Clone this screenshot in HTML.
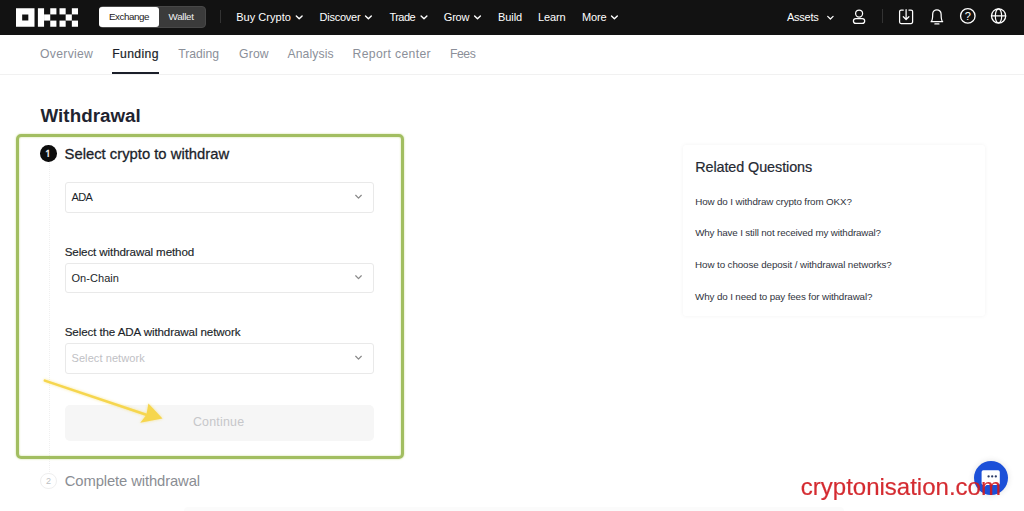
<!DOCTYPE html>
<html><head><meta charset="utf-8">
<style>
*{box-sizing:border-box;margin:0;padding:0}
html,body{width:1024px;height:511px;overflow:hidden;background:#fff;font-family:"Liberation Sans",sans-serif;color:#1b1f2a}
.abs{position:absolute}
.x{position:absolute;white-space:nowrap}
#nav{position:absolute;left:0;top:0;width:1024px;height:35px;background:#121212}
.sel{position:absolute;left:65px;width:309px;border:1px solid #e9e9e9;border-radius:3px;background:#fff}
svg{position:absolute;overflow:visible}
</style></head><body>
<div id="nav"></div>
<!-- logo -->
<svg style="left:16px;top:7.750px" width="62" height="19" viewBox="0 0 62 18.500">
  <g fill="#fff">
    <path d="M0 0h18.500v18.500H0z M6.170 6.170v6.160h6.160V6.170z" fill-rule="evenodd"/>
    <rect x="21.900" y="0" width="6.170" height="18.500"/>
    <rect x="28.070" y="6.170" width="6.170" height="6.170"/>
    <rect x="34.240" y="0" width="6.170" height="6.170"/><rect x="34.240" y="12.330" width="6.170" height="6.170"/>
    <rect x="43.500" y="0" width="6.170" height="6.170"/><rect x="55.840" y="0" width="6.170" height="6.170"/>
    <rect x="49.670" y="6.170" width="6.170" height="6.170"/>
    <rect x="43.500" y="12.330" width="6.170" height="6.170"/><rect x="55.840" y="12.330" width="6.170" height="6.170"/>
  </g>
</svg>
<!-- toggle -->
<div class="abs" style="left:98.500px;top:6px;width:107px;height:22px;border-radius:4px;background:#3b3b3b;border:1px solid #484848"></div>
<div class="abs" style="left:98.900px;top:6.800px;width:60.200px;height:20.400px;border-radius:3px;background:#fff"></div>
<div class="abs" style="left:220px;top:10px;width:1px;height:13px;background:#333"></div>
<div class="abs" style="left:882px;top:9px;width:1px;height:14px;background:#333"></div>
<!-- nav chevrons -->
<svg style="left:0;top:0" width="1024" height="35" fill="none" stroke="#fff" stroke-width="1.400" stroke-linecap="round" stroke-linejoin="round">
  <path d="M296.300 15.900l2.900 2.900 2.900-2.900"/>
  <path d="M365.500 15.900l2.900 2.900 2.900-2.900"/>
  <path d="M421.100 15.900l2.900 2.900 2.900-2.900"/>
  <path d="M474.600 15.900l2.900 2.900 2.900-2.900"/>
  <path d="M611.500 15.900l2.900 2.900 2.900-2.900"/>
  <path d="M827.700 16.300l2.700 2.700 2.700-2.700" stroke-width="1.200"/>
  <!-- user -->
  <circle cx="859.100" cy="13.500" r="3.500" stroke-width="1.250"/>
  <rect x="853.400" y="18.500" width="11.300" height="4.900" rx="2.450" stroke-width="1.250"/>
  <!-- download -->
  <path d="M903.300 10.100h-2.200a1.500 1.500 0 0 0-1.500 1.500v10.400a1.500 1.500 0 0 0 1.500 1.500h10a1.500 1.500 0 0 0 1.500-1.500v-10.400a1.500 1.500 0 0 0-1.500-1.500h-2.200" stroke-width="1.250"/>
  <path d="M906.100 9.700v9.400M903.300 16.700l2.800 2.800 2.800-2.800" stroke-width="1.250"/>
  <!-- bell -->
  <path d="M931.100 21.700c1.400-1 1.600-3 1.600-7.700a4.200 4.200 0 0 1 8.400 0c0 4.700.2 6.700 1.600 7.700z" stroke-width="1.250"/>
  <path d="M934.900 23.900h4" stroke-width="1.300"/>
  <!-- help -->
  <circle cx="967.800" cy="15.900" r="7.250" stroke-width="1.300"/>
  <!-- globe -->
  <circle cx="998.600" cy="15.900" r="7.100" stroke-width="1.300"/>
  <ellipse cx="998.500" cy="15.900" rx="3.200" ry="7.100" stroke-width="1.200"/>
  <path d="M991.400 15.900h14.200" stroke-width="1.200"/>
</svg>
<div class="x" style="left:964.700px;top:9.600px;font-size:11px;line-height:13px;color:#fff">?</div>

<!-- tabs -->
<div class="abs" style="left:0;top:74px;width:1024px;height:1px;background:#f1f1f1"></div>
<div class="abs" style="left:112px;top:72.200px;width:46.500px;height:1.800px;background:#1b1f2a"></div>

<!-- stepper -->
<div class="abs" style="left:48.500px;top:162px;width:0;height:312px;border-left:1.500px dotted #f0f0f0"></div>
<div class="abs" style="left:40.100px;top:145.100px;width:16.700px;height:16.700px;border-radius:50%;background:#0d0d0d"></div>
<div class="x" style="left:45.200px;top:149px;height:7.700px;overflow:hidden;font-size:10px;line-height:12px;color:#fff;-webkit-text-stroke:0.3px #fff">1</div>

<div class="sel" style="top:182px;height:30.500px"></div>
<div class="sel" style="top:262.500px;height:30.500px"></div>
<div class="sel" style="top:343px;height:30.500px"></div>
<svg style="left:0;top:0" width="1024" height="511" fill="none" stroke="#8a8a8a" stroke-width="1.250" stroke-linecap="round" stroke-linejoin="round">
  <path d="M355.700 195.300l2.800 2.800 2.800-2.800"/>
  <path d="M355.700 275.800l2.800 2.800 2.800-2.800"/>
  <path d="M355.700 356.300l2.800 2.800 2.800-2.800"/>
</svg>
<div class="abs" style="left:65px;top:405px;width:308.500px;height:36px;border-radius:5px;background:#f6f6f6"></div>

<div class="abs" style="left:40.200px;top:472.600px;width:16.500px;height:16.500px;border-radius:50%;background:#fff;border:1px solid #efefef"></div>
<div class="x" style="left:45.900px;top:475.500px;font-size:9px;line-height:10px;color:#bdbfc3">2</div>

<!-- green highlight box -->
<div class="abs" style="left:16.100px;top:134px;width:388px;height:324.900px;border:3.500px solid #a2be61;border-radius:5px;box-shadow:0 0 2px rgba(185,212,110,.8),inset 0 0 2px rgba(185,212,110,.8)"></div>

<!-- arrow -->
<svg style="left:0;top:0" width="1024" height="511">
  <g style="filter:drop-shadow(0 0 1.500px rgba(245,215,80,.6))">
  <path d="M44.800 380.600L147 415" stroke="#f6d64e" stroke-width="2.500" fill="none" stroke-linecap="round"/>
  <path d="M162.500 418.400L148.400 403.600L146.400 415L140.200 422.800Z" fill="#f6d64e"/>
  </g>
</svg>

<!-- right panel -->
<div class="abs" style="left:683px;top:145px;width:302px;height:171px;background:#fff;border-radius:3px;box-shadow:0 0 4px rgba(0,0,0,.055)"></div>

<div class="abs" style="left:184px;top:507px;width:660px;height:4px;background:#fbfbfb;border-radius:4px 4px 0 0"></div>
<!-- chat bubble -->
<div class="abs" style="left:974px;top:460.500px;width:34px;height:34px;border-radius:50%;background:#1c50d8;box-shadow:0 0 6px rgba(0,0,0,.12)"></div>
<svg style="left:0;top:0" width="1024" height="511">
  <path d="M983.300 470.200h14.800a1.700 1.700 0 0 1 1.700 1.700v11.400a1.700 1.700 0 0 1-1.700 1.700h-11.500l-3.300 3v-3h-0a1.700 1.700 0 0 1-1.700-1.700v-11.400a1.700 1.700 0 0 1 1.700-1.700z" fill="#fff"/>
  <circle cx="988.600" cy="476.400" r="1.150" fill="#2a3a66"/><circle cx="992.200" cy="476.400" r="1.150" fill="#2a3a66"/><circle cx="995.800" cy="476.400" r="1.150" fill="#2a3a66"/>
</svg>

<div id="ex" class="x" style="left:109.0px;top:10.30px;font-size:9.8px;line-height:13px;letter-spacing:-0.454px;color:#1a1a1a;">Exchange</div>
<div id="wa" class="x" style="left:168.6px;top:10.30px;font-size:9.8px;line-height:13px;letter-spacing:-0.292px;color:#f0f0f0;">Wallet</div>
<div id="n1" class="x" style="left:236.2px;top:9.79px;font-size:11px;line-height:14px;letter-spacing:0.036px;color:#fff;">Buy Crypto</div>
<div id="n2" class="x" style="left:319.5px;top:9.79px;font-size:11px;line-height:14px;letter-spacing:-0.242px;color:#fff;">Discover</div>
<div id="n3" class="x" style="left:389.4px;top:9.79px;font-size:11px;line-height:14px;letter-spacing:-0.532px;color:#fff;">Trade</div>
<div id="n4" class="x" style="left:443.8px;top:9.79px;font-size:11px;line-height:14px;letter-spacing:-0.210px;color:#fff;">Grow</div>
<div id="n5" class="x" style="left:498.0px;top:9.79px;font-size:11px;line-height:14px;letter-spacing:-0.067px;color:#fff;">Build</div>
<div id="n6" class="x" style="left:538.1px;top:9.79px;font-size:11px;line-height:14px;letter-spacing:-0.160px;color:#fff;">Learn</div>
<div id="n7" class="x" style="left:581.9px;top:9.79px;font-size:11px;line-height:14px;letter-spacing:-0.121px;color:#fff;">More</div>
<div id="n8" class="x" style="left:787.0px;top:9.79px;font-size:11px;line-height:14px;letter-spacing:-0.263px;color:#fff;">Assets</div>
<div id="t1" class="x" style="left:40.1px;top:45.77px;font-size:12.2px;line-height:16px;letter-spacing:0.286px;color:#8b8f99;">Overview</div>
<div id="t2" class="x" style="left:112.3px;top:45.77px;font-size:12.2px;line-height:16px;letter-spacing:0.359px;color:#1b1f2a;-webkit-text-stroke:0.2px #1b1f2a;">Funding</div>
<div id="t3" class="x" style="left:178.2px;top:45.77px;font-size:12.2px;line-height:16px;letter-spacing:-0.012px;color:#8b8f99;">Trading</div>
<div id="t4" class="x" style="left:239.1px;top:45.77px;font-size:12.2px;line-height:16px;letter-spacing:0.125px;color:#8b8f99;">Grow</div>
<div id="t5" class="x" style="left:287.4px;top:45.77px;font-size:12.2px;line-height:16px;letter-spacing:0.116px;color:#8b8f99;">Analysis</div>
<div id="t6" class="x" style="left:352.6px;top:45.77px;font-size:12.2px;line-height:16px;letter-spacing:0.346px;color:#8b8f99;">Report center</div>
<div id="t7" class="x" style="left:449.9px;top:45.77px;font-size:12.2px;line-height:16px;letter-spacing:-0.403px;color:#8b8f99;">Fees</div>
<div id="h" class="x" style="left:40.5px;top:104.09px;font-size:18.8px;line-height:24px;letter-spacing:0.032px;color:#1f2430;font-weight:bold;">Withdrawal</div>
<div id="s1" class="x" style="left:64.6px;top:144.97px;font-size:14.8px;line-height:19px;letter-spacing:0.001px;color:#1b1f2a;-webkit-text-stroke:0.3px #1b1f2a;">Select crypto to withdraw</div>
<div id="ada" class="x" style="left:71.5px;top:190.49px;font-size:11px;line-height:14px;letter-spacing:-0.612px;color:#1b1f2a;">ADA</div>
<div id="l1" class="x" style="left:64.7px;top:244.28px;font-size:11.6px;line-height:15px;letter-spacing:-0.113px;color:#1b1f2a;-webkit-text-stroke:0.15px #1b1f2a;">Select withdrawal method</div>
<div id="oc" class="x" style="left:71.5px;top:271.19px;font-size:11px;line-height:14px;letter-spacing:0.046px;color:#1b1f2a;">On-Chain</div>
<div id="l2" class="x" style="left:64.7px;top:324.48px;font-size:11.6px;line-height:15px;letter-spacing:-0.105px;color:#1b1f2a;-webkit-text-stroke:0.15px #1b1f2a;">Select the ADA withdrawal network</div>
<div id="sn" class="x" style="left:71.5px;top:351.19px;font-size:11px;line-height:14px;letter-spacing:0.080px;color:#bfc1c5;">Select network</div>
<div id="co" class="x" style="left:192.9px;top:414.10px;font-size:12.4px;line-height:16px;letter-spacing:0.227px;color:#c6c7ca;">Continue</div>
<div id="s2" class="x" style="left:64.8px;top:471.67px;font-size:14.8px;line-height:19px;letter-spacing:-0.114px;color:#8a8d93;">Complete withdrawal</div>
<div id="rq" class="x" style="left:695.2px;top:157.61px;font-size:14.4px;line-height:19px;letter-spacing:-0.088px;color:#252932;-webkit-text-stroke:0.2px #252932;">Related Questions</div>
<div id="q1" class="x" style="left:695.2px;top:194.70px;font-size:9.8px;line-height:13px;letter-spacing:-0.119px;color:#30343d;">How do I withdraw crypto from OKX?</div>
<div id="q2" class="x" style="left:695.2px;top:226.00px;font-size:9.8px;line-height:13px;letter-spacing:-0.147px;color:#30343d;">Why have I still not received my withdrawal?</div>
<div id="q3" class="x" style="left:695.1px;top:257.70px;font-size:9.8px;line-height:13px;letter-spacing:-0.101px;color:#30343d;">How to choose deposit / withdrawal networks?</div>
<div id="q4" class="x" style="left:695.1px;top:289.90px;font-size:9.8px;line-height:13px;letter-spacing:-0.128px;color:#30343d;">Why do I need to pay fees for withdrawal?</div>
<div id="wm" class="x" style="left:800.8px;top:471.18px;font-size:24px;line-height:31px;letter-spacing:0.000px;color:#d11a20;opacity:.92;-webkit-text-stroke:0.2px #d11a20;">cryptonisation.com</div>
</body></html>
